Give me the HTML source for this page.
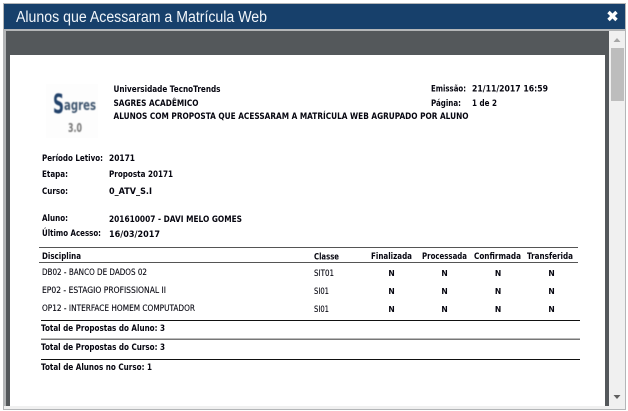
<!DOCTYPE html>
<html lang="pt">
<head>
<meta charset="utf-8">
<title>Alunos que Acessaram a Matrícula Web</title>
<style>
html,body{margin:0;padding:0;width:628px;height:411px;overflow:hidden;background:#fff}
svg{display:block;position:absolute;left:0;top:0}
text{font-family:"DejaVu Sans","Liberation Sans",sans-serif;font-size:8.8px;fill:#05050f}
.n{font-size:8.8px;stroke:#05050f;stroke-width:.12}
.m{font-size:7.6px}
.t{font-family:"Liberation Sans",sans-serif;font-size:15.5px;fill:#f2f6fa}
</style>
</head>
<body>
<svg width="628" height="411" viewBox="0 0 628 411" xmlns="http://www.w3.org/2000/svg">
<defs><filter id="bl" x="-10%" y="-10%" width="120%" height="120%"><feGaussianBlur stdDeviation="0.6"/></filter></defs>
<rect width="628" height="411" fill="#fff"/>
<rect x="3" y="3" width="623" height="407" fill="#b4b6b8"/>
<rect x="4" y="4" width="621" height="25" fill="#17406b"/>
<rect x="6" y="31" width="603" height="375" fill="#54585b"/>
<rect x="4" y="406" width="621" height="3" fill="#f0f0f0"/>
<rect x="10" y="55" width="595" height="351" fill="#fff"/>
<rect x="609" y="31" width="16" height="378" fill="#f0f0f0"/>
<rect x="611" y="48" width="13" height="53" fill="#bdbdbd"/>
<path d="M613.5 42 L617 38 L620.5 42 Z" fill="#a6a6a6"/>
<path d="M613.5 395 L620.5 395 L617 399 Z" fill="#606060"/>

<text class="t" x="16" y="22" textLength="251" lengthAdjust="spacingAndGlyphs">Alunos que Acessaram a Matrícula Web</text>
<path d="M608.5 12 L616.5 20 M616.5 12 L608.5 20" stroke="#fff" stroke-width="3.4" fill="none"/>

<rect x="46" y="84" width="52" height="54" fill="#fdfdfd"/>
<g filter="url(#bl)">
<text x="53" y="113" style="font-size:27px;font-weight:bold;fill:#23426a" textLength="11" lengthAdjust="spacingAndGlyphs">S</text>
<text x="64" y="110" style="font-size:14.5px;font-weight:bold;fill:#3f566f" textLength="32" lengthAdjust="spacingAndGlyphs">agres</text>
<text x="68" y="132" style="font-size:12px;font-weight:bold;fill:#777" textLength="14" lengthAdjust="spacingAndGlyphs">3.0</text>
</g>

<g font-weight="bold">
<text x="113.5" y="92" textLength="107" lengthAdjust="spacingAndGlyphs">Universidade TecnoTrends</text>
<text x="113.5" y="106" textLength="85" lengthAdjust="spacingAndGlyphs">SAGRES ACADÊMICO</text>
<text x="113.5" y="119" textLength="355" lengthAdjust="spacingAndGlyphs">ALUNOS COM PROPOSTA QUE ACESSARAM A MATRÍCULA WEB AGRUPADO POR ALUNO</text>
<text x="431" y="91.5" textLength="35" lengthAdjust="spacingAndGlyphs">Emissão:</text>
<text x="472" y="91.5" textLength="76" lengthAdjust="spacingAndGlyphs">21/11/2017 16:59</text>
<text x="431" y="106" textLength="30" lengthAdjust="spacingAndGlyphs">Página:</text>
<text x="472" y="106" textLength="25" lengthAdjust="spacingAndGlyphs">1 de 2</text>

<text x="42" y="161" textLength="61" lengthAdjust="spacingAndGlyphs">Período Letivo:</text>
<text x="109" y="161" textLength="26" lengthAdjust="spacingAndGlyphs">20171</text>
<text x="42" y="177" textLength="26" lengthAdjust="spacingAndGlyphs">Etapa:</text>
<text x="109" y="177" textLength="64" lengthAdjust="spacingAndGlyphs">Proposta 20171</text>
<text x="42" y="194" textLength="26" lengthAdjust="spacingAndGlyphs">Curso:</text>
<text x="109" y="194" textLength="43" lengthAdjust="spacingAndGlyphs">0_ATV_S.I</text>
<text x="42" y="221" textLength="26" lengthAdjust="spacingAndGlyphs">Aluno:</text>
<text x="109" y="222" textLength="133" lengthAdjust="spacingAndGlyphs">201610007 - DAVI MELO GOMES</text>
<text x="42" y="236" textLength="59" lengthAdjust="spacingAndGlyphs">Último Acesso:</text>
<text x="109" y="237" textLength="51" lengthAdjust="spacingAndGlyphs">16/03/2017</text>

<text x="42" y="259" textLength="39" lengthAdjust="spacingAndGlyphs">Disciplina</text>
<text x="314" y="259.5" textLength="25" lengthAdjust="spacingAndGlyphs">Classe</text>
<text x="371" y="259" textLength="41" lengthAdjust="spacingAndGlyphs">Finalizada</text>
<text x="422" y="259" textLength="45" lengthAdjust="spacingAndGlyphs">Processada</text>
<text x="474" y="259" textLength="47" lengthAdjust="spacingAndGlyphs">Confirmada</text>
<text x="527" y="259" textLength="46" lengthAdjust="spacingAndGlyphs">Transferida</text>

<text x="41" y="331" textLength="124" lengthAdjust="spacingAndGlyphs">Total de Propostas do Aluno: 3</text>
<text x="41" y="350" textLength="124" lengthAdjust="spacingAndGlyphs">Total de Propostas do Curso: 3</text>
<text x="41" y="370" textLength="111" lengthAdjust="spacingAndGlyphs">Total de Alunos no Curso: 1</text>
</g>

<g>
<text class="n" x="42" y="275" textLength="105" lengthAdjust="spacingAndGlyphs">DB02 - BANCO DE DADOS 02</text>
<text class="n" x="42" y="293" textLength="124" lengthAdjust="spacingAndGlyphs">EP02 - ESTAGIO PROFISSIONAL II</text>
<text class="n" x="42" y="311" textLength="153" lengthAdjust="spacingAndGlyphs">OP12 - INTERFACE HOMEM COMPUTADOR</text>
<text class="n" x="314" y="276" textLength="20" lengthAdjust="spacingAndGlyphs">SIT01</text>
<text class="n" x="314" y="294" textLength="15" lengthAdjust="spacingAndGlyphs">SI01</text>
<text class="n" x="314" y="312" textLength="15" lengthAdjust="spacingAndGlyphs">SI01</text>
</g>

<g font-weight="bold" text-anchor="middle">
<text class="m" x="391.5" y="276">N</text><text class="m" x="444.5" y="276">N</text><text class="m" x="498" y="276">N</text><text class="m" x="551.5" y="276">N</text>
<text class="m" x="391.5" y="294">N</text><text class="m" x="444.5" y="294">N</text><text class="m" x="498" y="294">N</text><text class="m" x="551.5" y="294">N</text>
<text class="m" x="391.5" y="312">N</text><text class="m" x="444.5" y="312">N</text><text class="m" x="498" y="312">N</text><text class="m" x="551.5" y="312">N</text>
</g>

<rect x="39" y="247" width="539" height="1" fill="#555"/>
<rect x="39" y="262" width="539" height="1" fill="#555"/>
<rect x="41" y="320" width="539" height="1" fill="#111"/>
<rect x="41" y="338.5" width="539" height="1.5" fill="#777"/>
<rect x="41" y="359" width="539" height="1" fill="#111"/>
</svg>
</body>
</html>
